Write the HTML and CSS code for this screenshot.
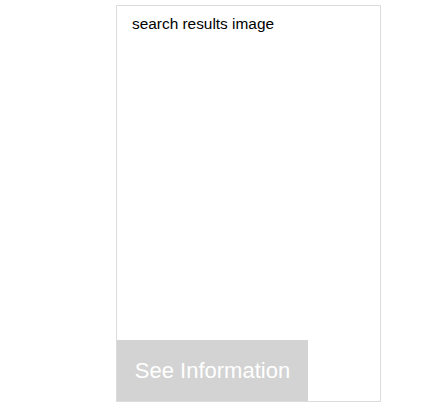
FILE: index.html
```html
<!DOCTYPE html>
<html>
<head>
<meta charset="utf-8">
<link rel="stylesheet" href="styles.css">
</head>
<body>
<div class="page">
  <div class="card">
    <div class="caption">search results image</div>
    <button class="info-btn">See Information</button>
  </div>
</div>
</body>
</html>
```
FILE: styles.css
```css
html, body {
  margin: 0;
  padding: 0;
  background: #fff;
}
.page {
  padding: 5px 0 0 116px;
}
.card {
  box-sizing: border-box;
  width: 265px;
  height: 397px;
  border: 1px solid #dcdcdc;
  display: flex;
  flex-direction: column;
  align-items: flex-start;
}
.caption {
  font-family: "Liberation Sans", Arial, sans-serif;
  font-size: 15.4px;
  color: #000;
  padding: 9px 0 0 15px;
}
.info-btn {
  margin-top: auto;
  width: 191px;
  height: 61px;
  border: none;
  background: #d3d3d3;
  color: #fff;
  font-family: "Liberation Sans", Arial, sans-serif;
  font-size: 22px;
  padding: 0;
  text-align: center;
}
```
